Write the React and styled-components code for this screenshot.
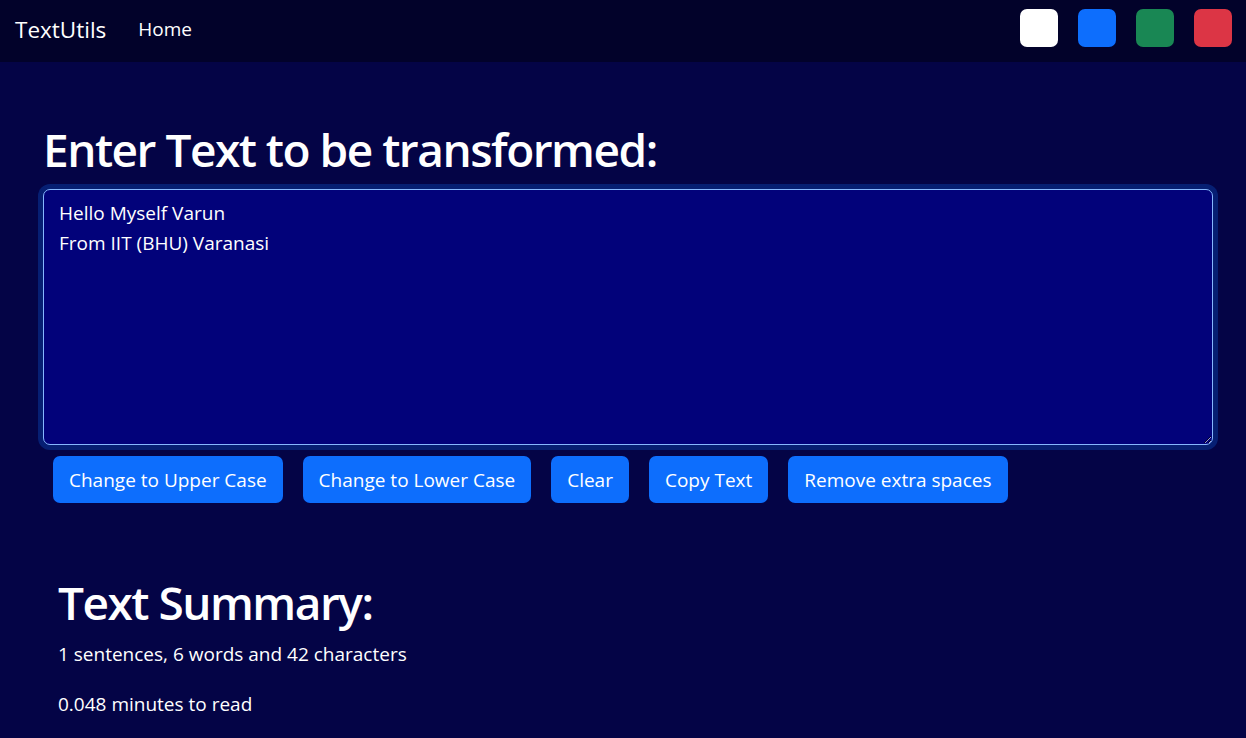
import React, { useEffect, useRef } from 'react';
import styled, { createGlobalStyle } from 'styled-components';

const GlobalStyle = createGlobalStyle`
  body {
    margin: 0;
    background: #040446;
    color: #fff;
    font-family: "Open Sans", "Noto Sans", sans-serif;
  }
`;

const Navbar = styled.nav`
  display: flex;
  align-items: center;
  box-sizing: border-box;
  height: 62px;
  padding: 0 16px 4px 15px;
  background: #02022a;
`;

const Brand = styled.a`
  font-size: 22.5px;
  color: #fff;
  text-decoration: none;
  margin-right: 32px;
`;

const NavLink = styled.a`
  font-size: 19px;
  color: #fff;
  text-decoration: none;
`;

const Swatches = styled.div`
  display: flex;
  gap: 20px;
  margin: 0 -2px 2px auto;
`;

const Swatch = styled.div`
  width: 38px;
  height: 38px;
  border-radius: 7px;
  background: ${p => p.color};
`;

const Main = styled.main`
  padding: 57px 33px 0 43px;
`;

const Heading = styled.h1`
  margin: 0 0 ${p => p.gap || 10}px;
  font-size: 46px;
  font-weight: 600;
  letter-spacing: -1.5px;
  line-height: 60px;
`;

const TextArea = styled.textarea`
  display: block;
  box-sizing: border-box;
  width: 100%;
  height: 256px;
  padding: 8px 15px;
  background: #02027a;
  color: #fff;
  caret-color: #fff;
  border: 1px solid #86b7fe;
  border-radius: 7px;
  box-shadow: 0 0 0 5px rgba(13, 110, 253, 0.25);
  font-family: inherit;
  font-size: 19px;
  line-height: 30px;
  resize: vertical;
  outline: none;
`;

const Buttons = styled.div`
  display: flex;
  gap: 20px;
  margin: 11px 0 0 10px;
`;

const Button = styled.button`
  height: 47px;
  padding: 0 16px;
  border: 0;
  border-radius: 7px;
  background: #0d6efd;
  color: #fff;
  font-family: inherit;
  font-size: 19px;
  cursor: pointer;
`;

const Summary = styled.section`
  margin-top: 69px;
  padding-left: 15px;
`;

const SummaryLine = styled.p`
  margin: 0 0 20px;
  font-size: 19px;
  line-height: 30px;
`;

const text = 'Hello Myself Varun\nFrom IIT (BHU) Varanasi';

export default function App() {
  const ref = useRef(null);

  useEffect(() => {
    const el = ref.current;
    el.focus();
    el.setSelectionRange(text.length, text.length);
  }, []);

  return (
    <>
      <GlobalStyle />
      <Navbar>
        <Brand href="#">TextUtils</Brand>
        <NavLink href="#">Home</NavLink>
        <Swatches>
          <Swatch color="#ffffff" />
          <Swatch color="#0d6efd" />
          <Swatch color="#198754" />
          <Swatch color="#dc3545" />
        </Swatches>
      </Navbar>
      <Main>
        <Heading>Enter Text to be transformed:</Heading>
        <TextArea ref={ref} defaultValue={text} spellCheck={false} />
        <Buttons>
          <Button>Change to Upper Case</Button>
          <Button>Change to Lower Case</Button>
          <Button>Clear</Button>
          <Button>Copy Text</Button>
          <Button>Remove extra spaces</Button>
        </Buttons>
        <Summary>
          <Heading gap={7}>Text Summary:</Heading>
          <SummaryLine>1 sentences, 6 words and 42 characters</SummaryLine>
          <SummaryLine>0.048 minutes to read</SummaryLine>
        </Summary>
      </Main>
    </>
  );
}
